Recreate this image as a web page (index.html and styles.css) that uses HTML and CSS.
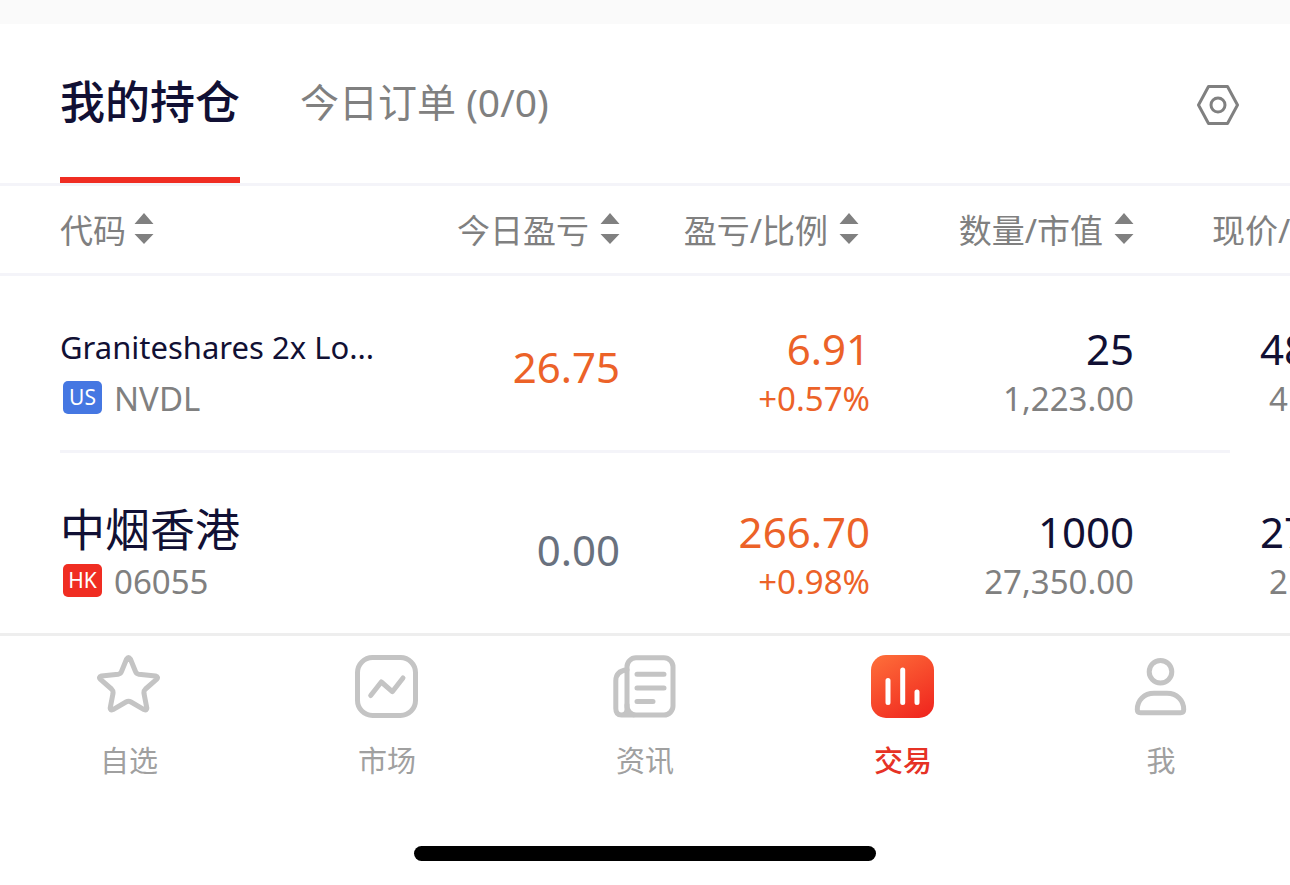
FILE: index.html
```html
<!DOCTYPE html>
<html lang="zh-CN">
<head>
    <meta charset="utf-8"/>
    <meta name="viewport" content="width=device-width, initial-scale=1">
    <title>我的持仓</title>
    <link rel="stylesheet" href="styles.css">
</head>
<body>

<!-- 排序箭头 -->
<svg class="defs" aria-hidden="true">
    <symbol id="sort" viewBox="0 0 20 32">
        <path d="M10 0 L19.5 11 H0.5 Z M0.5 21 H19.5 L10 31 Z"/>
    </symbol>
</svg>

<main class="page">
    <div class="tabs">
        <button type="button" class="tab active">我的持仓</button>
        <button type="button" class="tab">今日订单 (0/0)</button>
        <button type="button" class="setting" aria-label="设置">
            <svg viewBox="0 0 42 42">
                <path d="M11.5 2.5 H30.5 L40.5 21 L30.5 39.5 H11.5 L1.5 21 Z"/>
                <circle cx="21" cy="21" r="7"/>
            </svg>
        </button>
    </div>

    <div class="scroll">
        <table class="stocks">
            <colgroup>
                <col>
                <col class="col-today">
                <col class="col-profit">
                <col class="col-amount">
                <col class="col-price">
            </colgroup>
            <thead>
            <tr>
                <th class="left"><button type="button" class="sort near">代码<svg><use href="#sort"/></svg></button></th>
                <th><button type="button" class="sort">今日盈亏<svg><use href="#sort"/></svg></button></th>
                <th class="profit"><button type="button" class="sort">盈亏/比例<svg><use href="#sort"/></svg></button></th>
                <th><button type="button" class="sort">数量/市值<svg><use href="#sort"/></svg></button></th>
                <th class="price">现价/</th>
            </tr>
            </thead>
            <tbody>
            <tr>
                <td class="left">
                    <div class="name en">Graniteshares 2x Lo...</div>
                    <div class="code"><span class="market us">US</span>NVDL</div>
                </td>
                <td class="today up"><div class="num">26.75</div></td>
                <td class="up"><div class="num">6.91</div><div class="sub">+0.57%</div></td>
                <td><div class="num">25</div><div class="sub gray">1,223.00</div></td>
                <td class="price"><div class="num">48</div><div class="sub gray">4</div></td>
            </tr>
            <tr>
                <td class="left">
                    <div class="name">中烟香港</div>
                    <div class="code"><span class="market hk">HK</span>06055</div>
                </td>
                <td class="today flat"><div class="num">0.00</div></td>
                <td class="up"><div class="num">266.70</div><div class="sub">+0.98%</div></td>
                <td><div class="num">1000</div><div class="sub gray">27,350.00</div></td>
                <td class="price"><div class="num">27</div><div class="sub gray">2</div></td>
            </tr>
            </tbody>
        </table>
    </div>
</main>

<nav class="tabbar">
    <a href="#">
        <svg viewBox="0 0 64 64">
            <path d="M29.6 4 Q31.5 1 33.4 4 L38.5 16.5 Q39.3 18.8 41.8 19.2 L58.5 21 Q62 22 59.5 24.4 L48.5 34 Q46.6 35.8 47 38.5 L49.8 53 Q50 56 47 54.6 L34 47 Q31.5 45.6 29 47 L16 54.6 Q13 56 13.2 53 L16 38.5 Q16.4 35.8 14.5 34 L3.5 24.4 Q1 22 4.5 21 L21.2 19.2 Q23.7 18.8 24.5 16.5 Z"/>
        </svg>
        <span>自选</span>
    </a>
    <a href="#">
        <svg viewBox="0 0 64 64">
            <rect x="2.5" y="2.5" width="58" height="58" rx="15"/>
            <path d="M15.7 40.5 L26.3 27 L37.3 36.7 L48 23"/>
        </svg>
        <span>市场</span>
    </a>
    <a href="#">
        <svg viewBox="0 0 64 64">
            <rect x="14" y="2.8" width="46" height="57.2" rx="9"/>
            <path d="M14 14.8 Q2.8 16 2.8 26 V53.5 Q2.8 60 8.5 60 H20 M14 50 V54 Q14 60 8.5 60"/>
            <path d="M24 19.3 H51 M24 33 H51 M24 46.4 H40"/>
        </svg>
        <span>资讯</span>
    </a>
    <a href="#" class="active">
        <svg viewBox="0 0 64 64">
            <defs>
                <linearGradient id="hot" x1="0.2" y1="0" x2="0.8" y2="1">
                    <stop offset="0" stop-color="#fd6a38"/>
                    <stop offset="1" stop-color="#f0281f"/>
                </linearGradient>
            </defs>
            <rect class="fill" width="63" height="63" rx="15"/>
            <path class="bars" d="M17 25.5 V47.5 M31.7 15 V47.5 M46 37 V47.5"/>
        </svg>
        <span>交易</span>
    </a>
    <a href="#">
        <svg viewBox="0 0 64 64">
            <circle cx="31.5" cy="16.7" r="11.3"/>
            <path d="M8.3 54.5 C8.3 45.5 15 38.3 25 38.3 H38 C48 38.3 54.7 45.5 54.7 54.5 Q54.7 57.7 51.7 57.7 H11.3 Q8.3 57.7 8.3 54.5 Z"/>
        </svg>
        <span>我</span>
    </a>
</nav>
<div class="home-bar"></div>

</body>
</html>
```

FILE: styles.css
```css
* {
    box-sizing: border-box;
}

body {
    margin: 0;
    background: #fff;
    color: #111034;
    font-family: "Noto Sans", "Noto Sans CJK SC", sans-serif;
    overflow-x: hidden;
}

button {
    padding: 0;
    border: 0;
    background: none;
    font: inherit;
    color: inherit;
}

.defs {
    display: none;
}

.page {
    border-top: 24px solid #fafafa;
}

/* 顶部标签 */
.tabs {
    display: flex;
    gap: 60px;
    height: 162px;
    padding: 0 51px 0 60px;
    border-bottom: 3px solid #f4f4f9;
}

.tab {
    padding-bottom: 2px;
    border-bottom: 6px solid transparent;
    font-size: 39px;
    color: #808080;
}

.tab.active {
    border-bottom-color: #f02d22;
    font-size: 45px;
    font-weight: 500;
    color: #111034;
}

.setting {
    margin-left: auto;
    padding-top: 2px;
}

.setting svg {
    display: block;
    width: 42px;
    height: 42px;
    fill: none;
    stroke: #808080;
    stroke-width: 3;
    stroke-linejoin: round;
}

/* 持仓列表 */
.scroll {
    overflow: hidden;
}

.stocks {
    width: calc(100% + 100px);
    table-layout: fixed;
    border-collapse: separate;
    border-spacing: 0;
}

.col-today {
    width: 240px;
}

.col-profit {
    width: 250px;
}

.col-amount {
    width: 264px;
}

.col-price {
    width: 256px;
}

.stocks th {
    height: 90px;
    padding: 0 0 2px;
    border-bottom: 3px solid #f4f4f9;
    font-size: 33px;
    font-weight: 400;
    color: #808080;
    text-align: right;
}

.stocks th.profit {
    padding-right: 11px;
}

.sort {
    display: inline-flex;
    align-items: center;
    gap: 11px;
}

.sort.near {
    gap: 8px;
}

.sort svg {
    width: 20px;
    height: 32px;
    fill: #808080;
}

.stocks td {
    height: 180px;
    padding: 0 0 29px;
    text-align: right;
    vertical-align: bottom;
}

.stocks tbody tr:first-child td {
    height: 177px;
    padding-bottom: 32px;
}

.stocks tbody tr:first-child {
    background: linear-gradient(#f4f4f9, #f4f4f9) 60px 100% / calc(100vw - 120px) 3px no-repeat;
}

.stocks .left {
    padding-left: 60px;
    text-align: left;
    white-space: nowrap;
}

.stocks .price {
    padding-left: 78px;
    text-align: left;
}

.stocks td.price {
    padding-left: 126px;
}

.price .sub {
    padding-left: 9px;
}

.name {
    font-size: 45px;
    line-height: 60px;
}

.name.en {
    font-size: 31px;
}

.code {
    display: flex;
    align-items: center;
    gap: 12px;
    padding-left: 3px;
    font-size: 33px;
    line-height: 44px;
    color: #808080;
}

.market {
    width: 39px;
    margin-bottom: 4px;
    border-radius: 5px;
    font-size: 21px;
    line-height: 33px;
    text-align: center;
    color: #fff;
}

.us {
    background: #4577e2;
}

.hk {
    background: #f02d22;
}

.num {
    font-size: 42px;
    line-height: 56px;
}

.sub {
    font-size: 33px;
    line-height: 44px;
}

.today .num {
    margin-bottom: 26px;
}

.gray {
    color: #808080;
}

.up {
    color: #ec6228;
}

.flat {
    color: #69717e;
}

/* 底部导航 */
.tabbar {
    display: grid;
    grid-template-columns: repeat(5, 1fr);
    border-top: 3px solid #eee;
    padding-top: 19px;
}

.tabbar a {
    display: flex;
    flex-direction: column;
    align-items: center;
    gap: 20px;
    font-size: 29px;
    line-height: 44px;
    color: #a0a0a0;
    text-decoration: none;
}

.tabbar svg {
    width: 64px;
    height: 64px;
    fill: none;
    stroke: #c4c4c4;
    stroke-width: 5;
    stroke-linecap: round;
    stroke-linejoin: round;
}

.tabbar .active {
    font-weight: 500;
    color: #e63225;
}

.tabbar .fill {
    fill: url(#hot);
    stroke: none;
}

.tabbar .bars {
    stroke: #fff;
}

.home-bar {
    width: 462px;
    height: 15px;
    margin: 63px auto 24px;
    border-radius: 8px;
    background: #000;
}
```
